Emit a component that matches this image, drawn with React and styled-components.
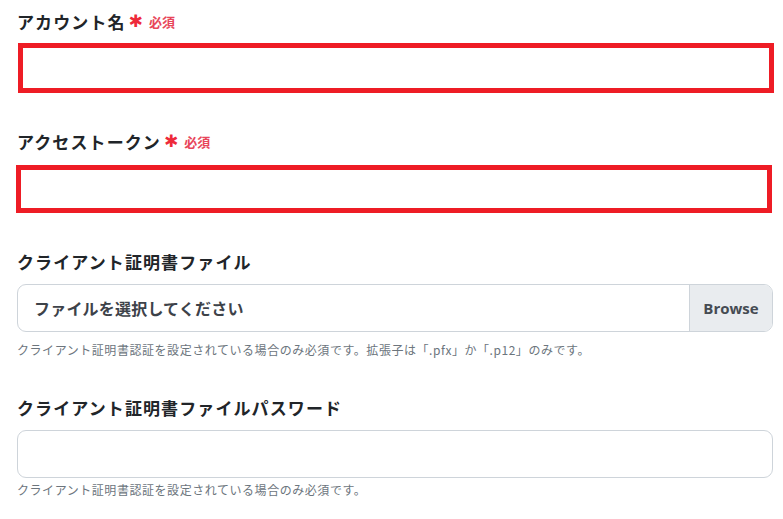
import React from "react";
import styled, { createGlobalStyle } from "styled-components";

const GlobalStyle = createGlobalStyle`
  body {
    margin: 0;
    background: #fff;
    font-family: "Noto Sans CJK JP", "Noto Sans", sans-serif;
    color: #212529;
  }
`;

const Form = styled.form`
  padding: 8px 10px 0 17px;
  display: flex;
  flex-direction: column;
`;

const Field = styled.div`
  display: flex;
  flex-direction: column;
  margin-bottom: 35px;
`;

const Label = styled.label`
  display: flex;
  align-items: center;
  height: 27px;
  font-size: 17px;
  font-weight: 700;
  letter-spacing: 1.1px;
  color: #212529;
  margin-bottom: ${(p) => p.$gap}px;
`;

const Star = styled.span`
  color: #ee2a3a;
  font-family: "DejaVu Sans", sans-serif;
  font-size: 17px;
  font-weight: 700;
  margin-left: 3px;
  line-height: 1;
`;

const Required = styled.span`
  color: #e8465a;
  font-size: 13px;
  font-weight: 700;
  margin-left: 5px;
  letter-spacing: 0;
`;

const FlaggedInput = styled.input`
  box-sizing: border-box;
  height: ${(p) => p.$height}px;
  margin-left: ${(p) => p.$shift}px;
  margin-right: ${(p) => -p.$shift}px;
  border: 5px solid #ee1c25;
  border-radius: 0;
  background: #fff;
  outline: none;
`;

const FileBox = styled.div`
  display: flex;
  height: 48px;
  box-sizing: border-box;
  border: 1px solid #ced4da;
  border-radius: 9px;
  overflow: hidden;
`;

const FileName = styled.div`
  flex: 1;
  display: flex;
  align-items: center;
  padding-left: 16px;
  font-size: 16px;
  font-weight: 700;
  letter-spacing: 0.2px;
  color: #3d4249;
`;

const Browse = styled.div`
  width: 82px;
  display: flex;
  align-items: center;
  justify-content: center;
  background: #e9ecef;
  border-left: 1px solid #ced4da;
  font-family: "Open Sans", "Noto Sans", sans-serif;
  font-size: 15px;
  font-weight: 700;
  color: #454b53;
`;

const TextInput = styled.input`
  box-sizing: border-box;
  height: 48px;
  border: 1px solid #ced4da;
  border-radius: 9px;
  background: #fff;
  outline: none;
`;

const Help = styled.div`
  font-size: 12px;
  line-height: 18px;
  color: #6c757d;
  letter-spacing: 0.55px;
  margin-top: ${(p) => p.$gap}px;
`;

export default function App() {
  return (
    <>
      <GlobalStyle />
      <Form>
        <Field>
          <Label $gap={8}>
            アカウント名<Star>✱</Star>
            <Required>必須</Required>
          </Label>
          <FlaggedInput $height={50} $shift={1} />
        </Field>
        <Field>
          <Label $gap={10}>
            アクセストークン<Star>✱</Star>
            <Required>必須</Required>
          </Label>
          <FlaggedInput $height={48} $shift={-1} />
        </Field>
        <Field>
          <Label $gap={9}>クライアント証明書ファイル</Label>
          <FileBox>
            <FileName>ファイルを選択してください</FileName>
            <Browse>Browse</Browse>
          </FileBox>
          <Help $gap={9}>
            クライアント証明書認証を設定されている場合のみ必須です。拡張子は「.pfx」か「.p12」のみです。
          </Help>
        </Field>
        <Field>
          <Label $gap={9}>クライアント証明書ファイルパスワード</Label>
          <TextInput type="password" />
          <Help $gap={3}>クライアント証明書認証を設定されている場合のみ必須です。</Help>
        </Field>
      </Form>
    </>
  );
}
